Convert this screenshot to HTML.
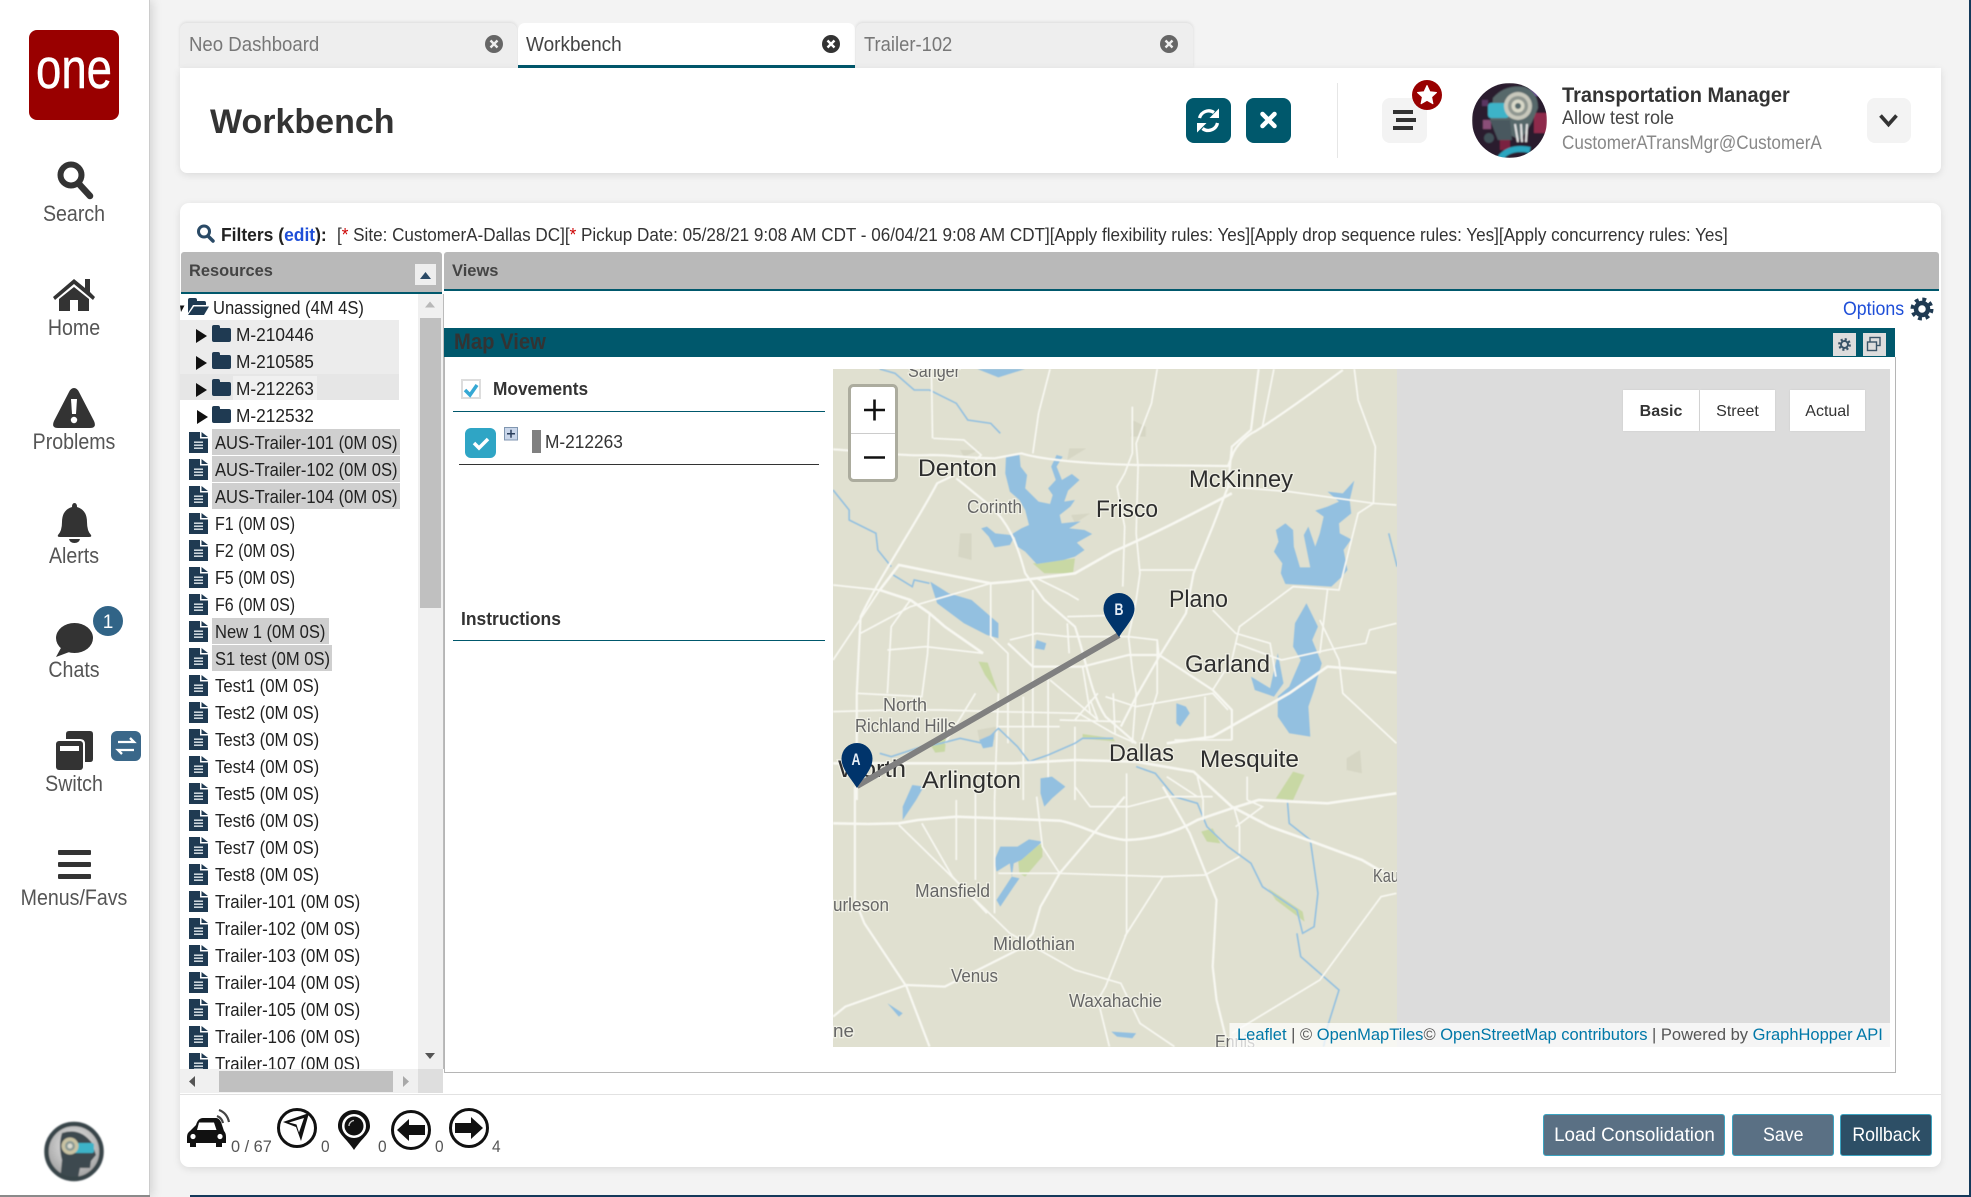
<!DOCTYPE html>
<html><head><meta charset="utf-8"><title>Workbench</title>
<style>
html,body{margin:0;padding:0;width:1971px;height:1197px;overflow:hidden;background:#f3f3f3;font-family:"Liberation Sans",sans-serif;color:#333}
.a{position:absolute}
.t{position:absolute;white-space:nowrap;line-height:1;transform:scaleX(.91);transform-origin:0 50%}
.n{font-size:22px;color:#555;text-align:center;width:160px;left:-6px;transform:scaleX(.89);transform-origin:50% 50%}
.r{font-size:18px;color:#222;transform:scaleX(.92)}
.q{transform:scaleX(.96)}
.b{position:absolute;box-sizing:border-box;border:1px solid #3ba3c0;border-radius:3px;color:#fff;font-size:19.5px;text-align:center;top:1114px;height:42px;line-height:40px;background:#5a7084}
.b span{display:inline-block;transform:scaleX(.91)}
.m{position:absolute;top:390px;height:41px;background:#fff;font-size:16px;text-align:center;line-height:43px;color:#333;box-shadow:0 0 2px rgba(0,0,0,.07)}
.c{font-size:16.5px;color:#555;transform:scaleX(1)}
</style></head>
<body>
<!-- page frame -->
<div class="a" style="left:150px;top:0;width:1819px;height:1197px;background:#f3f3f3"></div>
<div class="a" style="left:0;top:0;width:149px;height:1197px;background:#fff;border-right:1px solid #ccc;box-shadow:2px 0 10px rgba(0,0,0,.14)"></div>
<div class="a" style="left:0;top:1195px;width:150px;height:2px;background:#8a8a8a"></div>
<div class="a" style="left:190px;top:1195px;width:1781px;height:2px;background:#14395a"></div>
<div class="a" style="left:1969px;top:0;width:2px;height:1197px;background:#14395a"></div>

<!-- tabs -->
<div class="a" style="left:180px;top:23px;width:337px;height:45px;background:#eee;border-radius:7px 7px 0 0;box-shadow:0 -1px 3px rgba(0,0,0,.1)"></div>
<div class="a" style="left:518px;top:23px;width:337px;height:42px;background:#fff;border-bottom:3px solid #00586c;border-radius:7px 7px 0 0"></div>
<div class="a" style="left:856px;top:23px;width:337px;height:45px;background:#eee;border-radius:7px 7px 0 0;box-shadow:0 -1px 3px rgba(0,0,0,.1)"></div>

<!-- cards -->
<div class="a" style="left:180px;top:68px;width:1761px;height:105px;background:#fff;border-radius:0 0 7px 7px;box-shadow:0 2px 8px rgba(0,0,0,.1)"></div>
<div class="a" style="left:180px;top:203px;width:1761px;height:964px;background:#fff;border-radius:9px;box-shadow:0 2px 8px rgba(0,0,0,.1)"></div>

<!-- section headers -->
<div class="a" style="left:181px;top:252px;width:261px;height:40px;background:#b9b9b9;border-bottom:2px solid #00586c;border-radius:3px 3px 0 0"></div>
<div class="a" style="left:444px;top:252px;width:1495px;height:37px;background:#b9b9b9;border-bottom:2px solid #00586c;border-radius:3px 3px 0 0"></div>
<div class="a" style="left:415px;top:264px;width:21px;height:21px;background:#eee"></div>

<!-- tree highlights -->
<div class="a" style="left:180px;top:320px;width:219px;height:54px;background:#ececec"></div>
<div class="a" style="left:180px;top:374px;width:219px;height:26px;background:#e6e6e6"></div>
<div class="a" style="left:233px;top:376px;width:84px;height:24px;background:#f0f0f0"></div>
<div class="a" style="left:212px;top:429px;width:188px;height:26px;background:#cfcfcf"></div>
<div class="a" style="left:212px;top:456px;width:188px;height:26px;background:#cfcfcf"></div>
<div class="a" style="left:212px;top:483px;width:188px;height:26px;background:#cfcfcf"></div>
<div class="a" style="left:212px;top:618px;width:117px;height:26px;background:#cfcfcf"></div>
<div class="a" style="left:212px;top:645px;width:120px;height:26px;background:#cfcfcf"></div>

<!-- tree text -->
<div class="t r" style="left:213px;top:299px">Unassigned (4M 4S)</div>
<div class="t r q" style="left:236px;top:326px">M-210446</div>
<div class="t r q" style="left:236px;top:353px">M-210585</div>
<div class="t r q" style="left:236px;top:380px">M-212263</div>
<div class="t r q" style="left:236px;top:407px">M-212532</div>
<div class="t r" style="left:215px;top:434px">AUS-Trailer-101 (0M 0S)</div>
<div class="t r" style="left:215px;top:461px">AUS-Trailer-102 (0M 0S)</div>
<div class="t r" style="left:215px;top:488px">AUS-Trailer-104 (0M 0S)</div>
<div class="t r" style="left:215px;top:515px;transform:scaleX(.89)">F1 (0M 0S)</div>
<div class="t r" style="left:215px;top:542px;transform:scaleX(.89)">F2 (0M 0S)</div>
<div class="t r" style="left:215px;top:569px;transform:scaleX(.89)">F5 (0M 0S)</div>
<div class="t r" style="left:215px;top:596px;transform:scaleX(.89)">F6 (0M 0S)</div>
<div class="t r" style="left:215px;top:623px">New 1 (0M 0S)</div>
<div class="t r" style="left:215px;top:650px">S1 test (0M 0S)</div>
<div class="t r" style="left:215px;top:677px;transform:scaleX(.93)">Test1 (0M 0S)</div>
<div class="t r" style="left:215px;top:704px;transform:scaleX(.93)">Test2 (0M 0S)</div>
<div class="t r" style="left:215px;top:731px;transform:scaleX(.93)">Test3 (0M 0S)</div>
<div class="t r" style="left:215px;top:758px;transform:scaleX(.93)">Test4 (0M 0S)</div>
<div class="t r" style="left:215px;top:785px;transform:scaleX(.93)">Test5 (0M 0S)</div>
<div class="t r" style="left:215px;top:812px;transform:scaleX(.93)">Test6 (0M 0S)</div>
<div class="t r" style="left:215px;top:839px;transform:scaleX(.93)">Test7 (0M 0S)</div>
<div class="t r" style="left:215px;top:866px;transform:scaleX(.93)">Test8 (0M 0S)</div>
<div class="t r" style="left:215px;top:893px;transform:scaleX(.935)">Trailer-101 (0M 0S)</div>
<div class="t r" style="left:215px;top:920px;transform:scaleX(.935)">Trailer-102 (0M 0S)</div>
<div class="t r" style="left:215px;top:947px;transform:scaleX(.935)">Trailer-103 (0M 0S)</div>
<div class="t r" style="left:215px;top:974px;transform:scaleX(.935)">Trailer-104 (0M 0S)</div>
<div class="t r" style="left:215px;top:1001px;transform:scaleX(.935)">Trailer-105 (0M 0S)</div>
<div class="t r" style="left:215px;top:1028px;transform:scaleX(.935)">Trailer-106 (0M 0S)</div>
<div class="t r" style="left:215px;top:1055px;transform:scaleX(.935)">Trailer-107 (0M 0S)</div>

<!-- map panel frame + scrollbars -->
<div class="a" style="left:444px;top:357px;width:1450px;height:715px;border:1px solid #b5b5b5;border-top:0;background:#fff"></div>
<div class="a" style="left:444px;top:328px;width:1451px;height:29px;background:#00586c"></div>
<div class="a" style="left:418px;top:294px;width:25px;height:775px;background:#f0f0f0;border-right:1px solid #bbb"></div>
<div class="a" style="left:420px;top:318px;width:21px;height:290px;background:#c0c0c0"></div>
<div class="a" style="left:180px;top:1069px;width:238px;height:24px;background:#f0f0f0"></div>
<div class="a" style="left:219px;top:1071px;width:174px;height:21px;background:#c0c0c0"></div>
<div class="a" style="left:418px;top:1069px;width:25px;height:24px;background:#dedede"></div>
<div class="a" style="left:180px;top:1094px;width:1761px;height:1px;background:#e2e2e2"></div>
<div class="a" style="left:453px;top:411px;width:372px;height:1px;background:#00586c"></div>
<div class="a" style="left:459px;top:464px;width:360px;height:1px;background:#333"></div>
<div class="a" style="left:453px;top:640px;width:372px;height:1px;background:#00586c"></div>
<div class="a" style="left:1337px;top:83px;width:1px;height:75px;background:#e6e6e6"></div>

<!-- all icons + map -->
<svg class="a" style="left:0;top:0" width="1971" height="1197" viewBox="0 0 1971 1197" xmlns="http://www.w3.org/2000/svg">
<defs>
<filter id="bl" x="-2%" y="-2%" width="104%" height="104%"><feGaussianBlur stdDeviation=".55"/></filter>
<filter id="bt" x="-2%" y="-2%" width="104%" height="104%"><feGaussianBlur stdDeviation=".35"/></filter>
<filter id="ba" x="-5%" y="-5%" width="110%" height="110%"><feGaussianBlur stdDeviation=".9"/></filter>
<symbol id="file" width="19" height="21" viewBox="0 0 19 21"><path fill="#1f3a52" d="M0 0H11V6.5H19V21H0Z"/><path fill="#1f3a52" d="M12.5 0L19 5H12.5Z"/><path stroke="#e8eef2" stroke-width="1.4" d="M5 10.2H14M5 13.2H14M5 16.2H14"/></symbol>
<symbol id="fold" width="19" height="17" viewBox="0 0 19 17"><path fill="#1f3a52" d="M0 2Q0 0 2 0H6Q8 0 8 2V3H17Q19 3 19 5V15Q19 17 17 17H2Q0 17 0 15Z"/></symbol>
<symbol id="ctl" width="11" height="14" viewBox="0 0 11 14"><path fill="#111" d="M0 0L11 7L0 14Z"/></symbol>
<clipPath id="cav"><ellipse cx="1509.5" cy="120.5" rx="37.5" ry="37.5"/></clipPath>
<clipPath id="cav2"><circle cx="74" cy="1151.5" r="29.5"/></clipPath>
<radialGradient id="gr" cx=".5" cy=".4" r=".6"><stop offset="0" stop-color="#eee"/><stop offset="1" stop-color="#999"/></radialGradient>
</defs>

<!-- sidebar -->
<rect x="29" y="30" width="90" height="90" rx="8" fill="#990000"/>
<text x="36" y="88" font-family="Liberation Sans" font-size="57" fill="#fff" stroke="#fff" stroke-width=".5" textLength="76" lengthAdjust="spacingAndGlyphs">one</text>
<g fill="none" stroke="#333"><circle cx="71" cy="175" r="10.5" stroke-width="6"/><path d="M79 184L90 196" stroke-width="6.5" stroke-linecap="round"/></g>
<g fill="#333"><path d="M53 297L74 279L85 288V279H90V292L95 297L93 300L74 284L55 300Z"/><path d="M59 299L74 287L89 299V311H78V300H70V311H59Z"/></g>
<path fill="#333" d="M74 388Q77 388 79 392L94 421Q97 428 90 428H58Q51 428 54 421L69 392Q71 388 74 388Z"/><path fill="#fff" d="M71 399H77L76 414H72Z"/><circle cx="74" cy="420" r="3.2" fill="#fff"/>
<path fill="#333" d="M74.5 503Q77 503 77 507Q87 510 87 522Q87 531 91 535Q92 537 89 537H60Q57 537 58 535Q62 531 62 522Q62 510 72 507Q72 503 74.5 503Z"/><path fill="#333" d="M69 539H80Q79 543 74.5 543Q70 543 69 539Z"/>
<ellipse cx="74.5" cy="638" rx="18.5" ry="15" fill="#333"/><path fill="#333" d="M62 646L56 657L72 651Z"/>
<circle cx="108" cy="621" r="15" fill="#316487"/><text x="108" y="628" text-anchor="middle" font-family="Liberation Sans" font-size="19" fill="#fff">1</text>
<path fill="#333" d="M69 731H90Q93 731 93 734V759Q93 762 90 762H85V744Q85 739 80 739H66V734Q66 731 69 731Z"/>
<rect x="56" y="741" width="27" height="29" rx="3" fill="#333"/><rect x="60" y="746" width="19" height="5" fill="#fff"/>
<rect x="111" y="731" width="30" height="30" rx="6" fill="#3a6789"/>
<path d="M118 742H134M130 738L134 742L130 742M134 750H118M122 754L118 750L122 750" stroke="#fff" stroke-width="2.3" fill="none"/>
<rect x="58" y="850" width="33" height="5" rx="1" fill="#333"/><rect x="58" y="862" width="33" height="5" rx="1" fill="#333"/><rect x="58" y="874" width="33" height="5" rx="1" fill="#333"/>
<g filter="url(#ba)">
<circle cx="74" cy="1151.5" r="29.5" fill="url(#gr)"/>
<g clip-path="url(#cav2)"><path fill="#3c4a4f" d="M62 1133Q80 1127 92 1143L96 1155L91 1161L90 1168H80L78 1178L70 1182H60L62 1160Q58 1145 62 1133Z"/><rect x="73" y="1143" width="21" height="10" rx="2" fill="#3db3c8"/><circle cx="70" cy="1146" r="8.5" fill="#c9c2a3"/><circle cx="70" cy="1146" r="5" fill="#8a9a94"/><circle cx="70" cy="1146" r="2.5" fill="#dcdcd0"/></g>
<circle cx="74" cy="1151.5" r="27.5" fill="none" stroke="#37454a" stroke-width="4.5"/>
</g>

<!-- tab closers -->
<g><circle cx="494" cy="44" r="9" fill="#666"/><path d="M490.5 40.5L497.5 47.5M497.5 40.5L490.5 47.5" stroke="#eee" stroke-width="2.4"/></g>
<g><circle cx="831" cy="44" r="9" fill="#333"/><path d="M827.5 40.5L834.5 47.5M834.5 40.5L827.5 47.5" stroke="#fff" stroke-width="2.4"/></g>
<g><circle cx="1169" cy="44" r="9" fill="#666"/><path d="M1165.5 40.5L1172.5 47.5M1172.5 40.5L1165.5 47.5" stroke="#eee" stroke-width="2.4"/></g>

<!-- header buttons -->
<rect x="1186" y="98" width="45" height="45" rx="8" fill="#00586c"/><rect x="1246" y="98" width="45" height="45" rx="8" fill="#00586c"/>
<g fill="none" stroke="#fff" stroke-width="3.3"><path d="M1199.5 118A9.5 9.5 0 0 1 1214 112.5"/><path d="M1217.5 123A9.5 9.5 0 0 1 1202.5 128.5"/></g>
<path fill="#fff" d="M1219 108.5V118H1209.5ZM1197 132.5V123H1206.5Z"/>
<path d="M1262.5 114L1274.5 126M1274.5 114L1262.5 126" stroke="#fff" stroke-width="4.5" stroke-linecap="round"/>
<rect x="1382" y="98" width="45" height="45" rx="8" fill="#f3f3f3"/>
<rect x="1393" y="110" width="20" height="4" fill="#333"/><rect x="1396" y="118" width="20" height="4" fill="#333"/><rect x="1393" y="126" width="20" height="4" fill="#333"/>
<circle cx="1427" cy="95" r="15" fill="#990000"/><path fill="#fff" d="M1427 85.5L1429.9 91.7L1436.5 92.5L1431.6 97L1432.9 103.7L1427 100.3L1421.1 103.7L1422.4 97L1417.5 92.5L1424.1 91.7Z" stroke="#fff" stroke-width="1" stroke-linejoin="round"/>
<rect x="1867" y="98" width="44" height="45" rx="8" fill="#f3f3f3"/>
<path d="M1880.5 115.5L1888.5 124.5L1896.5 115.5" fill="none" stroke="#333" stroke-width="3.6"/>
<!-- avatar -->
<g clip-path="url(#cav)"><g filter="url(#ba)">
<rect x="1472" y="83" width="75" height="75" fill="#2a1b2e"/>
<rect x="1483" y="120" width="8" height="9" fill="#8a4f78"/><rect x="1482" y="100" width="6" height="6" fill="#5a3560"/><rect x="1534" y="113" width="13" height="20" fill="#8e2a4c"/><rect x="1500" y="140" width="10" height="10" fill="#7a2040"/><rect x="1530" y="86" width="12" height="10" fill="#6e4f94"/>
<path fill="#56676b" d="M1493 98Q1505 84 1525 87Q1538 92 1538 108L1532 122L1526 132L1520 140L1510 135L1505 122H1490L1492 108Z"/>
<path fill="#49595e" d="M1490 120H1510L1512 140H1498Z"/>
<rect x="1488" y="103" width="21" height="15" rx="3" fill="#3db3c8"/>
<circle cx="1518" cy="106" r="14" fill="#c8c8bc"/><circle cx="1518" cy="106" r="10" fill="#8f9690"/><circle cx="1518" cy="106" r="6.5" fill="#d8d8c8"/><circle cx="1518" cy="106" r="3" fill="#55686a"/>
<path d="M1515 124L1518 142M1521 124L1522 142M1527 124L1526 142" stroke="#e6e6e6" stroke-width="2"/>
<path d="M1500 158Q1510 146 1530 150" fill="none" stroke="#2ba6c0" stroke-width="6"/>
<circle cx="1489" cy="138" r="5" fill="#3f5158"/>
</g></g>

<!-- search icon filters -->
<g fill="none" stroke="#2a4a66"><circle cx="204" cy="231.5" r="5.5" stroke-width="3"/><path d="M208 236L213 241" stroke-width="3.5" stroke-linecap="round"/></g>

<!-- tree icons -->
<path d="M180 305.5L184.5 305.5L181 312Z" fill="#111"/>
<path fill="#1f3a52" d="M188 300Q188 298 190 298H195Q197 298 197 300V301H204Q206 301 206 303V305H193L188 313Z"/><path fill="#1f3a52" d="M194 306.5H209L204 315H188Z"/>
<use href="#ctl" x="196" y="329"/><use href="#fold" x="212" y="325"/>
<use href="#ctl" x="196" y="356"/><use href="#fold" x="212" y="352"/>
<use href="#ctl" x="196" y="383"/><use href="#fold" x="212" y="379"/>
<use href="#ctl" x="197" y="410"/><use href="#fold" x="212" y="406"/>
<use href="#file" x="189" y="432"/><use href="#file" x="189" y="459"/><use href="#file" x="189" y="486"/><use href="#file" x="189" y="513"/><use href="#file" x="189" y="540"/><use href="#file" x="189" y="567"/><use href="#file" x="189" y="594"/><use href="#file" x="189" y="621"/><use href="#file" x="189" y="648"/><use href="#file" x="189" y="675"/><use href="#file" x="189" y="702"/><use href="#file" x="189" y="729"/><use href="#file" x="189" y="756"/><use href="#file" x="189" y="783"/><use href="#file" x="189" y="810"/><use href="#file" x="189" y="837"/><use href="#file" x="189" y="864"/><use href="#file" x="189" y="891"/><use href="#file" x="189" y="918"/><use href="#file" x="189" y="945"/><use href="#file" x="189" y="972"/><use href="#file" x="189" y="999"/><use href="#file" x="189" y="1026"/>
<svg x="189" y="1053" width="19" height="16" viewBox="0 0 19 16"><use href="#file"/></svg>

<path d="M420 279L431 279L425.500 272Z" fill="#2a4a66"/>
<path d="M430 301.5L435 307.5H425Z" fill="#b8b8b8"/>
<path d="M425 1053H435L430 1059Z" fill="#555"/>
<path d="M189 1081.5L195 1076V1087Z" fill="#555"/><path d="M409 1081.5L403 1076V1087Z" fill="#a9a9a9"/>

<!-- options gear -->
<g fill="none" stroke="#1f3a52"><circle cx="1922" cy="309" r="9" stroke-width="5" stroke-dasharray="3.6 3.47"/><circle cx="1922" cy="309" r="6" stroke-width="4.5"/></g>
<!-- panel mini buttons -->
<rect x="1833" y="333" width="23" height="23" fill="#ddd"/><rect x="1863" y="333" width="23" height="23" fill="#ddd"/>
<g fill="none" stroke="#3a5468"><circle cx="1844.5" cy="344.5" r="5" stroke-width="2.8" stroke-dasharray="2 1.93"/><circle cx="1844.5" cy="344.5" r="3.5" stroke-width="2"/>
<rect x="1870" y="337.5" width="10" height="8" stroke-width="1.4"/><rect x="1867.5" y="342" width="9" height="8.5" fill="#ddd" stroke-width="1.4"/></g>

<!-- movement controls -->
<rect x="462" y="380" width="18" height="18" fill="#fff" stroke="#ddd" stroke-width="2"/>
<path d="M465 390L470 395L477 385" fill="none" stroke="#35a8d4" stroke-width="3.5"/>
<rect x="465" y="428" width="31" height="30" rx="6" fill="#2fa5c5"/>
<path d="M474 443L479 448L488 439" fill="none" stroke="#fff" stroke-width="3.5"/>
<rect x="504.5" y="427.5" width="13" height="12.5" fill="#c9d6ea" stroke="#8096b0"/>
<path d="M507 433.7H515M511 429.7V437.7" stroke="#2a3f5c" stroke-width="1.5"/>
<rect x="532" y="430" width="9" height="23" fill="#808080"/>

<!-- map -->
<rect x="833" y="369" width="1057" height="678" fill="#dcdcdc"/>
<svg x="833" y="369" width="564" height="678" viewBox="833 369 564 678">
<rect x="833" y="369" width="564" height="678" fill="#e0e0d0"/>
<g filter="url(#bl)">
<!-- zoom A coordinates -->
<g transform="translate(830,360) scale(.3827,.3333)">
 <g fill="#d6d6c4"><path d="M340 520L370 520L370 600L335 590Z"/><path d="M790 180L825 200L825 230L785 230Z"/><path d="M625 265L670 265L620 300Z"/><path d="M340 270L390 270L350 290Z"/><path d="M630 465L680 460L640 490Z"/><path d="M385 1110L435 1100L430 1140L390 1140Z"/></g>
 <g fill="#c8d8a4"><path d="M530 610L640 595L635 640L560 640Z"/><path d="M388 905L412 908L440 1000L405 945Z"/><path d="M260 1150L305 1118L300 1175L275 1178Z"/><path d="M905 1090L935 1060L915 1100Z"/></g>
 <g fill="#93c0e0">
 <path d="M460 285L495 282L498 320L515 345L510 385L545 425L575 432L582 405L570 385L590 360L578 320L592 285L608 290L592 320L606 360L632 342L652 360L622 392L612 425L640 420L628 440L600 465L605 490L655 484L625 505L665 510L685 522L645 548L665 570L640 590L610 600L540 612L510 575L490 560L482 530L470 555L430 562L415 530L395 505L410 500L432 520L472 525L500 505L520 495L510 450L495 420L470 395L458 340Z"/>
 <path d="M1300 395L1340 400L1370 362L1358 420L1362 460L1330 490L1332 520L1362 538L1342 570L1352 630L1338 650L1310 680L1240 675L1190 672L1178 640L1182 610L1160 575L1172 545L1165 510L1190 490L1210 510L1212 560L1228 622L1255 622L1238 525L1250 500L1268 560L1280 520L1290 470L1268 452L1300 440L1330 425Z"/>
 <path d="M1245 730L1275 800L1260 840L1285 910L1265 990L1250 1040L1255 1130L1200 1120L1170 1070L1170 1010L1200 980L1230 900L1210 860L1215 790Z"/>
 <path d="M1100 950L1150 985L1170 880L1185 970L1160 1010L1110 990Z"/>
 <path d="M262 665L310 700L370 720L440 790L440 835L410 825L350 790L280 730Z"/>
 <path d="M385 27L510 27L440 52Z"/>
 <path d="M905 1030L930 1040L940 1060L915 1100L905 1090Z"/>
 <path d="M540 840L565 850L560 870L535 865Z"/>
 </g>
 <g fill="none" stroke="#93c0e0" stroke-width="1.6">
 <path vector-effect="non-scaling-stroke" d="M8 390L50 450L50 480L120 520L125 570L160 620"/>
 <path vector-effect="non-scaling-stroke" d="M165 645L215 680L220 660L260 670"/>
 <path vector-effect="non-scaling-stroke" d="M130 27L170 40L220 90L260 90L330 130L360 180L420 190L445 220"/>
 <path vector-effect="non-scaling-stroke" d="M1460 520L1482 620"/>
 </g>
 <g fill="none" stroke="#f8f8f2" stroke-width="1.7">
 <path vector-effect="non-scaling-stroke" stroke-width="2.2" d="M8 268C100 275 200 290 265 285C330 285 350 295 430 295L500 280C540 295 640 310 800 315L1040 318L1050 290C1060 250 1100 220 1110 215C1200 150 1280 80 1340 30"/>
 <path vector-effect="non-scaling-stroke" d="M265 27L268 235M270 235L350 240L395 285L380 300"/>
 <path vector-effect="non-scaling-stroke" stroke-width="2.2" d="M325 345L280 370C220 500 130 650 80 770L70 1000L70 1320"/>
 <path vector-effect="non-scaling-stroke" stroke-width="2.2" d="M330 355L400 420C470 480 490 560 510 640L560 720L640 800C670 900 680 1000 720 1070L800 1150"/>
 <path vector-effect="non-scaling-stroke" stroke-width="2.6" d="M1050 400C950 460 850 520 740 575L640 640L540 655L470 665L420 670L330 650L180 615L130 690L210 720L260 760L300 800L400 880"/>
 <path vector-effect="non-scaling-stroke" d="M790 140L790 280L770 340L750 380L770 500L765 680M855 27L840 130L800 250L805 320L800 520L810 640L800 720L780 830L790 930L800 1000L790 1150"/>
 <path vector-effect="non-scaling-stroke" stroke-width="2.2" d="M1120 27L1100 210L1050 260L1040 380L1000 500L950 640L930 760L860 890L800 1010L760 1100"/>
 <path vector-effect="non-scaling-stroke" stroke-width="2.2" d="M465 850L530 920L660 920L780 885L860 885L920 930L1000 990L1050 1050L1050 1140"/>
 <path vector-effect="non-scaling-stroke" d="M1480 790L1410 810L1400 850L1300 870L1180 900L1060 850L1050 900L1000 990M860 890L855 840L780 830L620 830L540 820L470 840"/>
 <path vector-effect="non-scaling-stroke" stroke-width="2.6" d="M880 1150L1000 1130L1200 1000L1300 920L1480 938"/>
 <path vector-effect="non-scaling-stroke" d="M8 675L130 690L8 900M210 720L160 800L150 1000M260 760L255 880L240 1010L70 1000M80 820L210 740L420 670L420 830L465 880L465 1150M400 880L250 860L150 870M620 770L780 765M810 630L950 630M540 655L620 700L650 720M1000 750L1060 820L1150 850L1165 950M1060 850L1070 800L1210 680L1330 690L1380 460L1420 430L1480 435M1040 380L1200 395L1420 430L1425 260L1380 120L1370 27M1160 27L1130 200M575 27L545 160L530 280M8 1055L160 1050L290 1050L440 1055L650 1060L740 1120L800 1150M505 1010L505 1320M570 950L570 1320M640 1100L640 1320M380 1000L300 1150M440 1000L430 1320M680 1020L700 1080M720 1010L800 1040L1000 1000L1040 1050M1280 780L1330 900L1340 1000L1480 1150M1300 690L1280 880M530 690L530 1100M620 790L625 880M660 920L680 1060M575 960L700 1080M700 1000L640 1080M855 840L855 1000L815 1140M900 1140L1050 1140M980 1010L980 1140M740 1000L745 1120M600 1080L760 1085M440 1100L600 1100"/>
 </g>
</g>
<!-- zoom B coordinates -->
<g transform="translate(830,700) scale(.3827,.3333)">
 <g fill="#d6d6c4"><path d="M1350 175L1385 150L1390 220L1350 210Z"/></g>
 <g fill="#c8d8a4"><path d="M1210 215L1240 225L1210 300L1165 295Z"/><path d="M970 395L1000 385L1020 430L985 425Z"/><path d="M1145 565L1235 635L1240 665L1165 600Z"/><path d="M660 102L740 115L745 124L660 116Z"/><path d="M490 465L555 430L555 470L510 530L495 520Z"/></g>
 <g fill="#93c0e0">
 <path d="M550 235L580 230L615 260L580 295L560 320L550 280Z"/>
 <path d="M215 255L245 260L225 300L190 360L190 320Z"/>
 <path d="M430 480L445 440L490 440L520 418L555 425L500 480L480 490L475 530L495 535L480 560L445 620L435 600L475 530L470 490L435 515Z"/>
 <path d="M150 910L190 940L180 950Z"/>
 <path d="M735 995L800 1000L790 1015L750 1010Z"/>
 <path d="M390 120L430 100L425 140L400 145Z"/>
 </g>
 <g fill="none" stroke="#93c0e0" stroke-width="1.6">
 <path vector-effect="non-scaling-stroke" d="M130 160L160 170L240 140L290 130L340 115L400 130L440 85L490 140L520 185L570 165L640 130L660 115L740 115"/>
 <path vector-effect="non-scaling-stroke" d="M800 200L850 220L900 290L960 310L985 380L1040 440L1100 490L1130 560L1220 630L1235 700L1265 680L1275 580L1255 420L1200 370L1195 300"/>
 <path vector-effect="non-scaling-stroke" d="M1220 700L1230 770L1300 840L1330 870L1300 980L1290 1040"/>
 </g>
 <g fill="none" stroke="#f8f8f2" stroke-width="1.7">
 <path vector-effect="non-scaling-stroke" stroke-width="2.6" d="M8 370L100 372L180 370L230 360L330 350L440 355L600 362C660 375 700 410 770 420C830 420 900 400 960 360L1050 325L1120 300L1300 310L1480 280"/>
 <path vector-effect="non-scaling-stroke" stroke-width="2.6" d="M8 190L480 190L640 180L800 185L950 215L1050 320L1150 380L1260 425L1390 480L1480 540"/>
 <path vector-effect="non-scaling-stroke" stroke-width="2.2" d="M870 260L940 400L1010 600L1000 800L1010 900L1040 1040"/>
 <path vector-effect="non-scaling-stroke" stroke-width="2.2" d="M770 290L600 520L550 620L530 700L490 750L300 860L200 855L40 920L8 950"/>
 <path vector-effect="non-scaling-stroke" d="M180 375L470 700L640 810L760 850L810 970L900 1040"/>
 <path vector-effect="non-scaling-stroke" stroke-width="2.2" d="M65 260L65 600L90 670L200 860L260 1040"/>
 <path vector-effect="non-scaling-stroke" d="M775 220L775 700L720 860L700 900L730 1040M440 520L600 520L870 530L980 525L1070 470M240 370L320 530L410 640M430 300L430 640M1480 580L1440 590L1280 840L1150 930L1050 1000M380 280L380 540M870 530L820 620L770 710M1055 320L1070 380L1070 460M1090 300L1130 320L1060 380M640 260L680 320L780 320L880 290L1000 290M330 300L330 480M960 230L975 300L975 360M540 290L555 440L600 520M1090 230L1090 300M880 230L960 290"/>
 </g>
</g>
</g>
<!-- map labels -->
<g font-family="Liberation Sans" fill="#2e2e2e" stroke="#f5f5ec" stroke-opacity=".75" stroke-width="2.5" paint-order="stroke" font-size="24" filter="url(#bt)">
<text x="908" y="377" font-size="18" fill="#666" textLength="52" lengthAdjust="spacingAndGlyphs">Sanger</text>
<text x="918" y="476" textLength="79" lengthAdjust="spacingAndGlyphs">Denton</text>
<text x="1189" y="487" textLength="104" lengthAdjust="spacingAndGlyphs">McKinney</text>
<text x="967" y="513" font-size="18" fill="#666" textLength="55" lengthAdjust="spacingAndGlyphs">Corinth</text>
<text x="1096" y="517" textLength="62" lengthAdjust="spacingAndGlyphs">Frisco</text>
<text x="1169" y="607" textLength="59" lengthAdjust="spacingAndGlyphs">Plano</text>
<text x="1185" y="672" textLength="85" lengthAdjust="spacingAndGlyphs">Garland</text>
<text x="883" y="711" font-size="18" fill="#666" textLength="44" lengthAdjust="spacingAndGlyphs">North</text>
<text x="855" y="732" font-size="18" fill="#666" textLength="101" lengthAdjust="spacingAndGlyphs">Richland Hills</text>
<text x="838" y="777" textLength="68" lengthAdjust="spacingAndGlyphs">Worth</text>
<text x="922" y="788" textLength="99" lengthAdjust="spacingAndGlyphs">Arlington</text>
<text x="1109" y="761" textLength="65" lengthAdjust="spacingAndGlyphs">Dallas</text>
<text x="1200" y="767" textLength="99" lengthAdjust="spacingAndGlyphs">Mesquite</text>
<text x="915" y="897" font-size="18" fill="#666" textLength="75" lengthAdjust="spacingAndGlyphs">Mansfield</text>
<text x="833" y="911" font-size="18" fill="#666" textLength="56" lengthAdjust="spacingAndGlyphs">urleson</text>
<text x="993" y="950" font-size="18" fill="#666" textLength="82" lengthAdjust="spacingAndGlyphs">Midlothian</text>
<text x="951" y="982" font-size="18" fill="#666" textLength="47" lengthAdjust="spacingAndGlyphs">Venus</text>
<text x="1069" y="1007" font-size="18" fill="#666" textLength="93" lengthAdjust="spacingAndGlyphs">Waxahachie</text>
<text x="833" y="1037" font-size="18" fill="#666" textLength="21" lengthAdjust="spacingAndGlyphs">ne</text>
<text x="1373" y="882" font-size="18" fill="#666" textLength="30" lengthAdjust="spacingAndGlyphs">Kauf</text>
<text x="1215" y="1048" font-size="18" fill="#666" textLength="40" lengthAdjust="spacingAndGlyphs">Ennis</text>
</g>
<!-- route -->
<path d="M1119 635L857 786" stroke="#808080" stroke-width="6" fill="none"/>
<path fill="#00346b" d="M1119 637C1112 626 1103.5 618 1103.5 608.5A15.5 15.5 0 0 1 1134.5 608.5C1134.5 618 1126 626 1119 637Z"/>
<path fill="#00346b" d="M857 788C850 777 841.5 769 841.5 758.5A15.5 15.5 0 0 1 872.500 758.5C872.5 769 864 777 857 788Z"/>
<text x="1119" y="615" text-anchor="middle" font-family="Liberation Sans" font-weight="bold" font-size="17" fill="#e6eef6" textLength="9" lengthAdjust="spacingAndGlyphs">B</text>
<text x="856" y="765" text-anchor="middle" font-family="Liberation Sans" font-weight="bold" font-size="17" fill="#e6eef6" textLength="9" lengthAdjust="spacingAndGlyphs">A</text>
</svg>
<!-- zoom ctl -->
<rect x="849.5" y="385.5" width="47" height="95" rx="4" fill="#fff" stroke="#acac9e" stroke-width="3"/>
<rect x="851" y="433" width="44" height="1" fill="#ccc"/>
<path d="M864 410H885M874.5 399.5V420.5M864 457.500H885" stroke="#111" stroke-width="2.6"/>
<!-- attribution bg -->
<rect x="1229.5" y="1023" width="660.5" height="24" fill="#fff" fill-opacity=".72"/>

<!-- bottom stat icons -->
<g fill="#111">
<path d="M196 1125Q198 1118 203 1118H216Q220 1118 222 1125L224 1131Q226 1133 226 1137V1143H222V1147H216V1143H196V1147H190V1143H187V1137Q187 1133 190 1131Z"/>
<path fill="#fff" d="M197 1130L199 1122.5H214L216.500 1130Z"/>
<circle cx="193" cy="1136.5" r="2.6" fill="#fff"/><circle cx="220" cy="1136.5" r="2.6" fill="#fff"/>
</g>
<path d="M217 1116Q222 1118 223 1123M219 1110Q227 1113 229 1122" fill="none" stroke="#444" stroke-width="2.2"/>
<circle cx="297" cy="1128" r="18.5" fill="#fff" stroke="#111" stroke-width="3"/>
<path d="M283 1122L309 1113L301 1141L296 1127Z M289 1122.5L296.5 1124.5L299 1132.5L304 1118Z" fill="#111" fill-rule="evenodd"/>
<path d="M354 1110C344 1110 338 1118 338 1126C338 1134 346 1138 354 1150C362 1138 370 1134 370 1126C370 1118 364 1110 354 1110Z" fill="#111"/>
<circle cx="354" cy="1126" r="12" fill="#fff"/><circle cx="354" cy="1126" r="9.5" fill="#111"/><path d="M349 1126A5.500 5.500 0 0 1 354 1120.500" fill="none" stroke="#ccc" stroke-width="1.300"/>
<circle cx="411" cy="1130" r="18.5" fill="#fff" stroke="#111" stroke-width="3"/>
<path fill="#111" d="M397 1130L409 1119V1125H425V1135H409V1141Z"/>
<circle cx="469" cy="1128" r="18.5" fill="#fff" stroke="#111" stroke-width="3"/>
<path fill="#111" d="M483 1128L471 1117V1123H455V1133H471V1139Z"/>
</svg>

<!-- sidebar labels -->
<div class="t n" style="top:203px">Search</div>
<div class="t n" style="top:317px">Home</div>
<div class="t n" style="top:431px">Problems</div>
<div class="t n" style="top:545px">Alerts</div>
<div class="t n" style="top:659px">Chats</div>
<div class="t n" style="top:773px">Switch</div>
<div class="t n" style="top:887px">Menus/Favs</div>

<!-- tabs text -->
<div class="t" style="left:189px;top:35px;font-size:20px;color:#777;transform:scaleX(.93)">Neo Dashboard</div>
<div class="t" style="left:526px;top:35px;font-size:20px;color:#444;transform:scaleX(.95)">Workbench</div>
<div class="t" style="left:864px;top:35px;font-size:20px;color:#777;transform:scaleX(.92)">Trailer-102</div>

<!-- header text -->
<div class="t" style="left:210px;top:105px;font-size:34px;font-weight:bold;color:#333;transform:none">Workbench</div>
<div class="t" style="left:1562px;top:85px;font-size:21.5px;font-weight:bold;color:#333;transform:scaleX(.93)">Transportation Manager</div>
<div class="t" style="left:1562px;top:109px;font-size:19.8px;color:#444">Allow test role</div>
<div class="t" style="left:1562px;top:134px;font-size:19.8px;color:#888;transform:scaleX(.865)">CustomerATransMgr@CustomerA</div>

<!-- filter line -->
<div class="t" style="left:221px;top:226px;font-size:18px;font-weight:bold;color:#222;transform:scaleX(.97)">Filters (<span style="color:#1f4fd8">edit</span>):</div>
<div class="t" style="left:337px;top:226px;font-size:18px;color:#333;transform:scaleX(.949)">[<span style="color:#c00">*</span> Site: CustomerA-Dallas DC][<span style="color:#c00">*</span> Pickup Date: 05/28/21 9:08 AM CDT - 06/04/21 9:08 AM CDT][Apply flexibility rules: Yes][Apply drop sequence rules: Yes][Apply concurrency rules: Yes]</div>

<!-- section titles -->
<div class="t" style="left:189px;top:262px;font-size:17px;font-weight:bold;color:#444;transform:scaleX(.965)">Resources</div>
<div class="t" style="left:452px;top:262px;font-size:17px;font-weight:bold;color:#444;transform:scaleX(.97)">Views</div>
<div class="t" style="left:1843px;top:300px;font-size:19.5px;color:#1f4fd8">Options</div>
<div class="t" style="left:454px;top:331px;font-size:22px;font-weight:bold;color:#333;transform:scaleX(.92)">Map View</div>

<!-- movements -->
<div class="t" style="left:493px;top:380px;font-size:18px;font-weight:bold;color:#333;transform:scaleX(.96)">Movements</div>
<div class="t" style="left:545px;top:433px;font-size:18px;color:#333;transform:scaleX(.96)">M-212263</div>
<div class="t" style="left:461px;top:610px;font-size:18px;font-weight:bold;color:#333;transform:scaleX(.97)">Instructions</div>

<!-- map type -->
<div class="m" style="left:1623px;width:76px;font-weight:bold">Basic</div>
<div class="m" style="left:1700px;width:75px">Street</div>
<div class="m" style="left:1790px;width:75px">Actual</div>

<!-- attribution -->
<div class="t c" style="left:1237px;top:1027px"><span style="color:#0078a8">Leaflet</span> | © <span style="color:#0078a8">OpenMapTiles</span>© <span style="color:#0078a8">OpenStreetMap contributors</span> | Powered by <span style="color:#0078a8">GraphHopper API</span></div>

<!-- bottom counts -->
<div class="t" style="left:231px;top:1138px;font-size:17px;color:#555;transform:scaleX(.96)">0 / 67</div>
<div class="t" style="left:321px;top:1138px;font-size:17px;color:#555">0</div>
<div class="t" style="left:378px;top:1138px;font-size:17px;color:#555">0</div>
<div class="t" style="left:435px;top:1138px;font-size:17px;color:#555">0</div>
<div class="t" style="left:492px;top:1138px;font-size:17px;color:#555">4</div>

<!-- action buttons -->
<div class="b" style="left:1543px;width:182px"><span style="transform:scaleX(.963)">Load Consolidation</span></div>
<div class="b" style="left:1732px;width:102px"><span>Save</span></div>
<div class="b" style="left:1840px;width:92px;background:#2d4f66"><span>Rollback</span></div>
</body></html>
